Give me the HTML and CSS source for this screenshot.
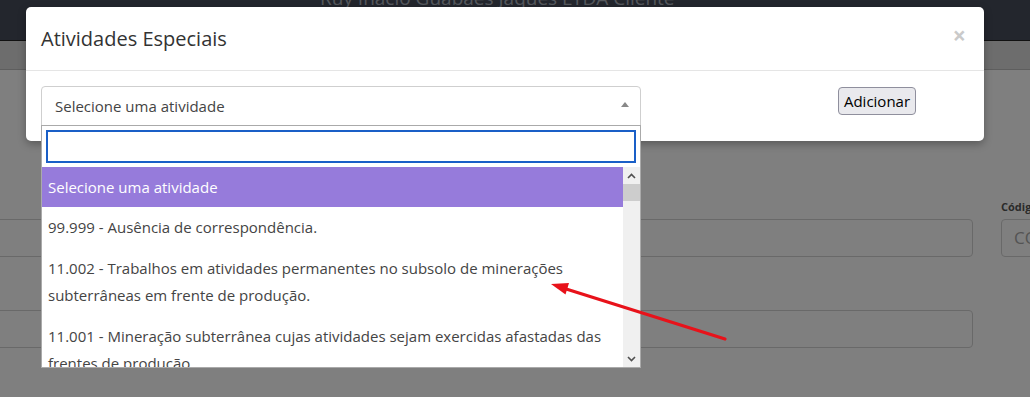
FILE: index.html
```html
<!DOCTYPE html>
<html lang="pt-BR">
<head>
<meta charset="utf-8">
<title>Atividades Especiais</title>
<link rel="stylesheet" href="styles.css">
</head>
<body>
<div class="page">
  <header class="navbar"><span class="brand">Ruy Inácio Guabaes Jaques LTDA Cliente</span></header>
  <div class="subbar"></div>
  <main class="content">
    <div class="form-grid">
      <div class="field"><span class="lbl"></span><div class="input"></div></div>
      <div class="field"><label class="lbl">Código</label><div class="input">CONTRATO</div></div>
      <div class="field"><span class="lbl"></span><div class="input"></div></div>
    </div>
  </main>
</div>
<div class="backdrop"></div>
<div class="modal">
  <div class="modal-header">
    <h4 class="modal-title">Atividades Especiais</h4>
    <span class="close">&times;</span>
  </div>
  <div class="modal-body">
    <div class="select-wrap">
      <div class="select-box">
        <span class="select-text">Selecione uma atividade</span>
        <span class="select-arrow"></span>
      </div>
      <div class="dropdown">
        <div class="search"><div class="search-input"></div></div>
        <div class="results">
          <ul class="options">
            <li class="opt active">Selecione uma atividade</li>
            <li class="opt">99.999 - Ausência de correspondência.</li>
            <li class="opt">11.002 - Trabalhos em atividades permanentes no subsolo de minerações subterrâneas em frente de produção.</li>
            <li class="opt">11.001 - Mineração subterrânea cujas atividades sejam exercidas afastadas das frentes de produção.</li>
          </ul>
          <div class="scrollbar">
            <div class="sb-btn"><svg width="9" height="6" viewBox="0 0 9 6"><path d="M1 5 L4.5 1.5 L8 5" fill="none" stroke="#505050" stroke-width="1.6"/></svg></div>
            <div class="sb-thumb"></div>
            <div class="sb-track"></div>
            <div class="sb-btn"><svg width="9" height="6" viewBox="0 0 9 6"><path d="M1 1 L4.5 4.5 L8 1" fill="none" stroke="#505050" stroke-width="1.6"/></svg></div>
          </div>
        </div>
      </div>
    </div>
    <button class="btn">Adicionar</button>
  </div>
</div>
<svg class="annot" width="1030" height="397" viewBox="0 0 1030 397">
  <line x1="725" y1="339" x2="563" y2="288" stroke="#e8121a" stroke-width="3.2" stroke-linecap="round"/>
  <polygon points="551,284 569,283 565.5,294.5" fill="#e8121a"/>
</svg>
</body>
</html>
```

FILE: styles.css
```css
html, body {
  margin: 0;
  padding: 0;
}
body {
  width: 1030px;
  height: 397px;
  overflow: hidden;
  position: relative;
  font-family: "Open Sans", "Noto Sans", sans-serif;
  background: #fff;
}
.page {
  display: flex;
  flex-direction: column;
}
.navbar {
  height: 41px;
  box-sizing: border-box;
  background: #464c5a;
  border-bottom: 1px solid #222;
  display: flex;
  justify-content: flex-start;
  overflow: hidden;
}
.brand {
  margin-top: -14px;
  padding-left: 320px;
  font-size: 19px;
  line-height: 24px;
  color: #aab0ba;
  white-space: nowrap;
}
.subbar {
  height: 28px;
  background: #dadada;
  border-bottom: 1px solid #bdbdbd;
}
.content {
  padding-top: 129px;
}
.form-grid {
  display: grid;
  grid-template-columns: 1003px 200px;
  column-gap: 28px;
  row-gap: 33px;
  margin-left: -30px;
}
.field {
  display: flex;
  flex-direction: column;
}
.lbl {
  display: block;
  height: 15px;
  font-size: 11px;
  font-weight: 700;
  line-height: 15px;
  margin-bottom: 5px;
  color: #555;
}
.input {
  height: 38px;
  box-sizing: border-box;
  border: 1px solid #d2d2d2;
  border-radius: 4px;
  padding: 0 12px;
  font-size: 17px;
  line-height: 36px;
  color: #a8a8a8;
  overflow: hidden;
  white-space: nowrap;
}
.backdrop {
  position: absolute;
  inset: 0;
  background: rgba(0, 0, 0, 0.5);
}
.modal {
  position: absolute;
  left: 26px;
  top: 7px;
  width: 958px;
  background: #fff;
  border-radius: 5px;
  box-shadow: 0 3px 9px rgba(0, 0, 0, 0.3);
}
.modal-header {
  display: flex;
  align-items: center;
  justify-content: space-between;
  padding: 15px;
  border-bottom: 1px solid #e5e5e5;
}
.modal-title {
  margin: 0;
  font-size: 20px;
  font-weight: 400;
  line-height: 33px;
  color: #333;
}
.close {
  font-size: 23px;
  font-weight: 700;
  line-height: 20px;
  color: #cacaca;
  margin-right: 3px;
  margin-top: -7px;
}
.modal-body {
  padding: 15px;
  display: flex;
  align-items: flex-start;
}
.select-wrap {
  position: relative;
  width: 600px;
}
.select-box {
  height: 40px;
  box-sizing: border-box;
  border: 1px solid #cfcfcf;
  border-radius: 4px 4px 0 0;
  display: flex;
  align-items: center;
  justify-content: space-between;
  padding: 0 11px 0 13px;
}
.select-text {
  font-size: 15px;
  color: #444;
}
.select-arrow {
  width: 0;
  height: 0;
  border-style: solid;
  border-width: 0 4px 5px 4px;
  border-color: transparent transparent #888 transparent;
  margin-top: -3px;
}
.dropdown {
  position: absolute;
  left: 0;
  top: 39px;
  width: 600px;
  box-sizing: border-box;
  border: 1px solid #aaa;
  background: #fff;
  z-index: 5;
}
.search {
  padding: 4px;
}
.search-input {
  height: 33px;
  box-sizing: border-box;
  border: 2px solid #1a5fc7;
}
.results {
  display: flex;
  height: 200px;
  overflow: hidden;
}
.options {
  flex: 1;
  list-style: none;
  margin: 0;
  padding: 0;
}
.opt {
  padding: 7px 6px;
  font-size: 15px;
  line-height: 27px;
  color: #444;
}
.opt.active {
  background: #967bdb;
  color: #fff;
  padding: 6px 6px;
  line-height: 28px;
}
.scrollbar {
  width: 17px;
  background: #f0f0f0;
  display: flex;
  flex-direction: column;
}
.sb-btn {
  height: 17px;
  display: flex;
  align-items: center;
  justify-content: center;
}
.sb-thumb {
  height: 17px;
  background: #cdcdcd;
}
.sb-track {
  flex: 1;
}
.btn {
  margin-left: 197px;
  margin-top: 1px;
  width: 78px;
  height: 28px;
  box-sizing: border-box;
  padding: 0;
  background: #e9e9ed;
  border: 1px solid #8f8f9d;
  border-radius: 4px;
  font-family: "Open Sans", "Noto Sans", sans-serif;
  font-size: 15px;
  color: #000;
}
.annot {
  position: absolute;
  left: 0;
  top: 0;
  z-index: 10;
  pointer-events: none;
}
```
